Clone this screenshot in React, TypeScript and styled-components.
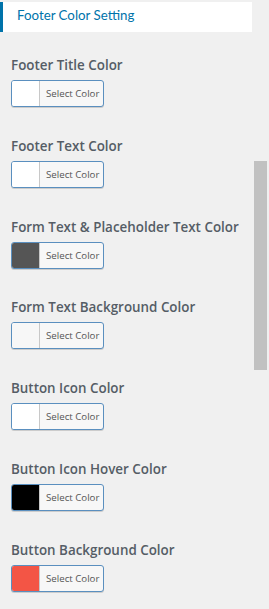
import React from "react";
import styled, { createGlobalStyle } from "styled-components";

const Global = createGlobalStyle`
  html, body { margin: 0; padding: 0; background: #f0f0f0; }
  body { font-family: "Open Sans", "Noto Sans", sans-serif; overflow: hidden; }
`;

const Page = styled.div`
  position: relative;
  width: 269px;
  height: 609px;
  background: #f0f0f0;
  overflow: hidden;
`;

const Panel = styled.div`
  width: 252px;
  display: flex;
  flex-direction: column;
`;

const Header = styled.div`
  margin-top: 2px;
  height: 30px;
  background: #fff;
  border-left: 3px solid #0073aa;
  display: flex;
  align-items: center;
  padding-left: 14px;
  padding-bottom: 5px;
  box-sizing: border-box;
  font-family: Lato, "Open Sans", sans-serif;
  font-size: 13.3px;
  color: #0073aa;
  font-weight: 400;
`;

const List = styled.div`
  display: flex;
  flex-direction: column;
  padding: 24px 0 0 11px;
  gap: 29.8px;
`;

const Control = styled.div`
  display: flex;
  flex-direction: column;
  gap: 6px;
`;

const Label = styled.div`
  font-size: 13.4px;
  font-weight: 600;
  color: #555d66;
  line-height: 18px;
  height: 18px;
  white-space: nowrap;
`;

const ColorButton = styled.div`
  display: flex;
  width: 93px;
  height: 27px;
  box-sizing: border-box;
  border: 1px solid #5a8fbf;
  border-radius: 3px;
  overflow: hidden;
  background: #f7f7f7;
  box-shadow: 0 1px 0 #ccc;
`;

const Swatch = styled.div<{ $c: string }>`
  width: 27px;
  flex: none;
  background: ${(p) => p.$c};
  border-right: 1px solid #c8c8c8;
`;

const ButtonText = styled.div`
  flex: 1;
  display: flex;
  align-items: center;
  padding-left: 6px;
  font-size: 9.7px;
  color: #555;
`;

const Thumb = styled.div`
  position: absolute;
  left: 254px;
  top: 161px;
  width: 13px;
  height: 209px;
  background: #c1c1c1;
`;

const items: [string, string][] = [
  ["Footer Title Color", "#ffffff"],
  ["Footer Text Color", "#ffffff"],
  ["Form Text & Placeholder Text Color", "#555555"],
  ["Form Text Background Color", "#f7f7f7"],
  ["Button Icon Color", "#ffffff"],
  ["Button Icon Hover Color", "#000000"],
  ["Button Background Color", "#f35545"],
];

export default function App() {
  return (
    <Page>
      <Global />
      <Panel>
        <Header>Footer Color Setting</Header>
        <List>
          {items.map(([l, c]) => (
            <Control key={l}>
              <Label>{l}</Label>
              <ColorButton>
                <Swatch $c={c} />
                <ButtonText>Select Color</ButtonText>
              </ColorButton>
            </Control>
          ))}
        </List>
      </Panel>
      <Thumb />
    </Page>
  );
}
